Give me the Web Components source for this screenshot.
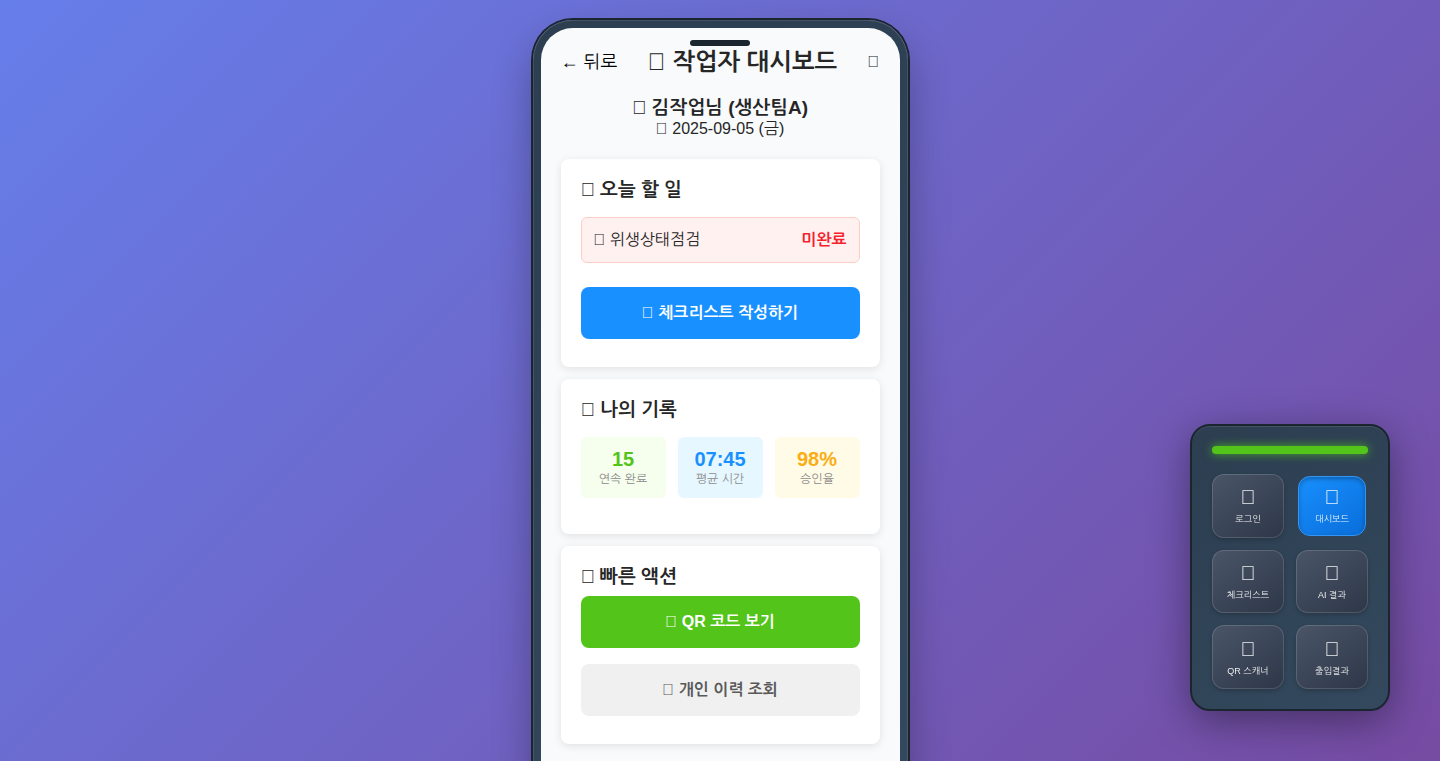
<!DOCTYPE html>
<html lang="ko">
<head>
<meta charset="utf-8">
<meta name="viewport" content="width=device-width, initial-scale=1">
<title>작업자 대시보드</title>
<style>
  html { height: 100%; }
  body {
    margin: 0; height: 100vh; overflow: hidden; box-sizing: border-box; padding: 20px;
    display: flex; justify-content: center; align-items: flex-start;
    font-family: "Liberation Sans", Arial, NanumGothic, "Noto Sans CJK KR", sans-serif;
    color: #262626; background: linear-gradient(135deg, #667eea 0%, #764ba2 100%);
  }
</style>
</head>
<body>
<phone-frame>
  <app-header heading="작업자 대시보드"></app-header>
  <worker-info name="김작업님 (생산팀A)" date="2025-09-05 (금)"></worker-info>
  <info-card heading="오늘 할 일">
    <task-row status="미완료">위생상태점검</task-row>
    <action-button variant="primary">체크리스트 작성하기</action-button>
  </info-card>
  <info-card heading="나의 기록">
    <stat-row>
      <stat-tile tone="green" value="15">연속 완료</stat-tile>
      <stat-tile tone="blue" value="07:45">평균 시간</stat-tile>
      <stat-tile tone="amber" value="98%">승인율</stat-tile>
    </stat-row>
  </info-card>
  <info-card heading="빠른 액션">
    <action-button variant="success">QR 코드 보기</action-button>
    <action-button variant="neutral">개인 이력 조회</action-button>
  </info-card>
</phone-frame>
<remote-control>
  <remote-key>로그인</remote-key>
  <remote-key active>대시보드</remote-key>
  <remote-key>체크리스트</remote-key>
  <remote-key>AI 결과</remote-key>
  <remote-key>QR 스캐너</remote-key>
  <remote-key>출입결과</remote-key>
</remote-control>

<script>
class BaseElement extends HTMLElement {
  connectedCallback() {
    if (this.shadowRoot) return;
    this.attachShadow({ mode: 'open' }).innerHTML = this.template();
  }
  attr(name) { return this.getAttribute(name) || ''; }
}

// Empty-box pictogram that takes the size and colour of the text round it.
customElements.define('box-icon', class extends BaseElement {
  template() { return `<style>
    :host { display: inline; }
    :host::before { content: "\\e000"; }
  </style>`; }
});

customElements.define('phone-frame', class extends BaseElement {
  template() { return `<style>
    :host { display: block; position: relative; box-sizing: border-box; width: 375px; max-width: 100%; flex-shrink: 0;
      padding: 8px; border-radius: 40px; background: linear-gradient(145deg, #2c3e50, #34495e);
      box-shadow: 0 0 0 2px #1a252f, 0 20px 40px rgba(0,0,0,.3), inset 0 1px 0 rgba(255,255,255,.1), inset 1px 0 0 rgba(255,255,255,.1), inset -1px 0 0 rgba(255,255,255,.1); }
    .notch { position: absolute; top: 20px; left: 50%; transform: translateX(-50%); width: 60px; height: 6px; border-radius: 3px; background: #1a252f; z-index: 1; }
    main { box-sizing: border-box; min-height: 796px; padding: 20px; border-radius: 32px; background: #f8fafc; }
  </style><div class="notch"></div><main><slot></slot></main>`; }
});

customElements.define('app-header', class extends BaseElement {
  template() { return `<style>
    :host { display: flex; align-items: center; justify-content: space-between; height: 28px; margin-bottom: 20px; }
    button { font: inherit; border: 0; padding: 0; background: none; cursor: pointer; }
    .back { font-size: 18px; line-height: 24px; color: #000; }
    .bell { font-size: 16px; line-height: 20px; color: inherit; }
    h1 { margin: 0; font-size: 24px; line-height: 28px; white-space: nowrap; }
  </style><button class="back" type="button">← 뒤로</button><h1><box-icon></box-icon> ${this.attr('heading')}</h1><button class="bell" type="button" aria-label="알림"><box-icon></box-icon></button>`; }
});

customElements.define('worker-info', class extends BaseElement {
  template() { return `<style>
    :host { display: block; text-align: center; margin-bottom: 22px; }
    h2 { margin: 0; font-size: 19px; line-height: 24px; }
    p { margin: 0; font-size: 16px; line-height: 17px; }
  </style><h2><box-icon></box-icon> ${this.attr('name')}</h2><p><box-icon></box-icon> ${this.attr('date')}</p>`; }
});

customElements.define('info-card', class extends BaseElement {
  template() { return `<style>
    :host { display: block; padding: 20px; margin-bottom: 12px; border-radius: 8px; background: #fff; box-shadow: 0 2px 8px rgba(0,0,0,.1); }
    h3 { margin: 0; font-size: 19px; line-height: 22px; }
    .body { display: flow-root; }
  </style><h3><box-icon></box-icon> ${this.attr('heading')}</h3><div class="body"><slot></slot></div>`; }
});

customElements.define('task-row', class extends BaseElement {
  template() { return `<style>
    :host { display: flex; justify-content: space-between; align-items: center; margin: 16px 0; padding: 12px;
      font-size: 16px; line-height: 20px; border: 1px solid #ffccc7; border-radius: 6px; background: #fff1f0; }
    strong { color: #f5222d; }
  </style><span><box-icon></box-icon> <slot></slot></span><strong>${this.attr('status')}</strong>`; }
});

customElements.define('action-button', class extends BaseElement {
  template() { return `<style>
    :host { display: block; padding: 8px 0; --bg: #1890ff; --fg: #fff; }
    :host([variant=success]) { --bg: #52c41a; }
    :host([variant=neutral]) { --bg: #f0f0f0; --fg: #595959; }
    button { display: block; width: 100%; padding: 16px; border: 0; border-radius: 8px; background: var(--bg); color: var(--fg);
      font: inherit; font-size: 16px; font-weight: 700; line-height: 20px; cursor: pointer; }
  </style><button type="button"><box-icon></box-icon> <slot></slot></button>`; }
});

customElements.define('stat-row', class extends BaseElement {
  template() { return `<style>
    :host { display: grid; grid-template-columns: repeat(3, 1fr); gap: 12px; margin: 16px 0; }
  </style><slot></slot>`; }
});

customElements.define('stat-tile', class extends BaseElement {
  template() { return `<style>
    :host { display: block; padding: 12px 0; border-radius: 6px; text-align: center; background: #f6ffed; --fg: #52c41a; }
    :host([tone=blue]) { background: #e6f7ff; --fg: #1890ff; }
    :host([tone=amber]) { background: #fffbe6; --fg: #faad14; }
    strong { display: block; margin-bottom: 2px; font-size: 20px; line-height: 21px; color: var(--fg); }
    span { display: block; font-size: 12px; line-height: 14px; color: #8c8c8c; }
  </style><strong>${this.attr('value')}</strong><span><slot></slot></span>`; }
});

customElements.define('remote-control', class extends BaseElement {
  template() { return `<style>
    :host { display: block; position: fixed; right: 50px; bottom: 50px; box-sizing: border-box; width: 200px; padding: 20px;
      border: 2px solid #1a252f; border-radius: 20px; background: linear-gradient(145deg, #2c3e50, #34495e);
      box-shadow: 0 10px 40px rgba(0,0,0,.4), inset 0 1px 0 rgba(255,255,255,.1); }
    .led { height: 8px; margin-bottom: 20px; border-radius: 4px; background: #52c41a; box-shadow: 0 0 10px rgba(82,196,26,.8); }
    nav { display: grid; grid-template-columns: 1fr 1fr; grid-template-rows: repeat(3, 1fr); gap: 12px; height: 215px; }
  </style><div class="led"></div><nav><slot></slot></nav>`; }
});

customElements.define('remote-key', class extends BaseElement {
  template() { return `<style>
    :host { display: flex; }
    :host([active]) { padding: 2px; }
    button { display: flex; flex-direction: column; align-items: center; justify-content: center; gap: 4px; flex: 1; min-width: 0;
      padding: 0; border: 1px solid rgba(255,255,255,.15); border-radius: 12px; color: rgba(255,255,255,.9); font: inherit; cursor: pointer;
      background: linear-gradient(145deg, #4a5568, #2d3748) border-box; box-shadow: 0 2px 4px rgba(0,0,0,.2); }
    :host([active]) button { background: linear-gradient(145deg, #1890ff, #096dd9) border-box; box-shadow: inset 0 2px 4px rgba(0,0,0,.3); border-color: #3396f5; }
    .icon { font-size: 20px; line-height: 24px; }
    .label { font-size: 9px; line-height: 13px; }
  </style><button type="button"><span class="icon"><box-icon></box-icon></span><span class="label"><slot></slot></span></button>`; }
});
</script>
</body>
</html>
